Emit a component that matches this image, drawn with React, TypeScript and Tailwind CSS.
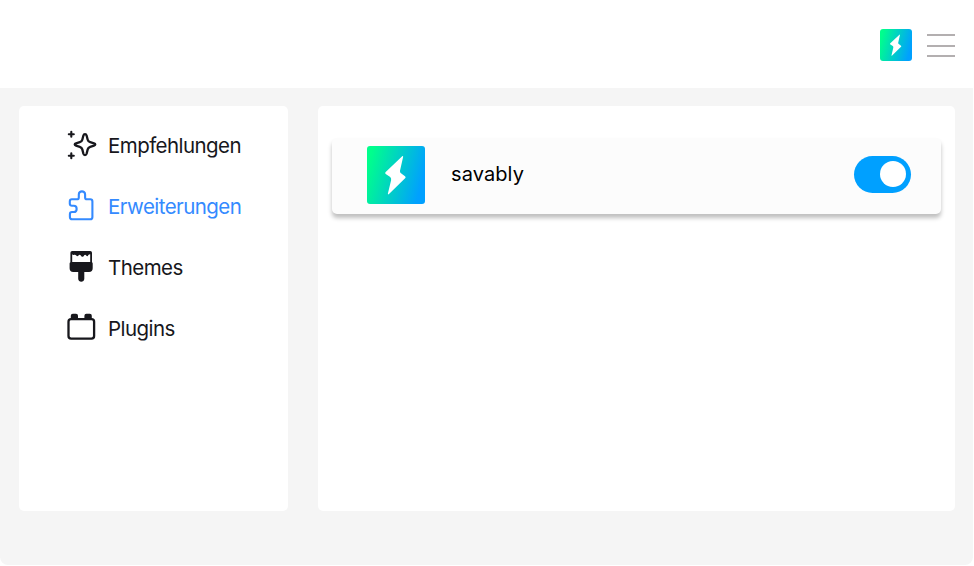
import type { ReactNode } from "react";
import { clsx } from "clsx";

interface NavItem {
  label: string;
  icon: ReactNode;
  active?: boolean;
}

function SparklesIcon() {
  return (
    <svg width="32" height="32" viewBox="0 0 32 32" fill="none" stroke="currentColor" strokeWidth="2.3" strokeLinejoin="round" strokeLinecap="round">
      <path d="M17.4 6.5C17.9 4.7 20.1 4.7 20.6 6.5L21.7 10.7Q22.2 12.7 24.2 13.2L28 14.4C29.7 14.9 29.7 16.1 28 16.6L24.2 17.8Q22.2 18.4 21.7 20.4L20.6 24.8C20.1 26.5 17.9 26.5 17.4 24.8L16.3 20.4Q15.8 18.4 13.8 17.8L10 16.6C8.3 16.1 8.3 14.9 10 14.4L13.8 13.2Q15.8 12.7 16.3 10.7Z" />
      <path d="M5.3 2.8V7.8M2.8 5.3H7.8M5.3 24.2V29.2M2.8 26.7H7.8" strokeWidth="2.1" />
    </svg>
  );
}

function PuzzleIcon() {
  return (
    <svg width="32" height="32" viewBox="0 0 32 32" fill="none" stroke="currentColor" strokeWidth="2.1" strokeLinejoin="round" strokeLinecap="round">
      <path d="M5.9 9.3H10.8Q12.8 9.3 12.8 7.4V4.4C12.8 0.3 19.1 0.3 19.1 4.4V7.4Q19.1 9.3 21.1 9.3H24.2Q26.4 9.3 26.4 11.5V27Q26.4 29.3 24.2 29.3H6.2Q3.9 29.3 3.9 27V24.2Q3.9 22 6 22H7.8C11.6 22 11.6 15.8 7.8 15.8H6Q3.8 15.8 3.8 13.8V11.4Q3.8 9.3 5.9 9.3Z" />
    </svg>
  );
}

function BrushIcon() {
  return (
    <svg width="32" height="32" viewBox="0 0 32 32" fill="currentColor">
      <path d="M6.2 0H24.2Q26 0 26 1.8V11.2Q26.7 11.6 26.7 12.6V17.3Q26.7 21 23 21H18.3V27.7C18.3 31.7 12.2 31.7 12.2 27.7V21H7.3Q3.6 21 3.6 17.3V12.6Q3.6 11.6 4.4 11.2V1.8Q4.4 0 6.2 0ZM6.2 3.2V11H24.2V3.2Q22.7 3.2 22.2 4.3Q21.4 6 20.2 4.4Q19.3 3.4 18.2 4.2C17.2 6.2 15.6 6.2 14.8 4.4Q13.6 3.2 12.5 4.4Q11.2 6 10.3 4.5Q9.2 3.3 8.3 3.8Q7 4.4 6.2 3.2Z" fillRule="evenodd" />
    </svg>
  );
}

function BrickIcon() {
  return (
    <svg width="32" height="32" viewBox="0 0 32 32" fill="none">
      <rect x="2.5" y="7.1" width="25.6" height="19.5" rx="2.6" stroke="currentColor" strokeWidth="2.3" />
      <path d="M4.8 7V3.7Q4.8 1.7 6.8 1.7H10Q12 1.7 12 3.7V7ZM18.4 7V3.7Q18.4 1.7 20.4 1.7H23.8Q25.8 1.7 25.8 3.7V7Z" fill="currentColor" />
    </svg>
  );
}

function Logo({ className }: { className?: string }) {
  return (
    <div className={clsx("bg-[linear-gradient(105deg,#00ff8c_8%,#00a0ff_88%)]", className)}>
      <svg className="size-full" viewBox="0 0 58 58" fill="white">
        <path d="M35.2 10.3Q36.3 9.5 36.1 11L33 24.8Q32.7 26.4 34 27.3L38 30.2Q39.3 31.1 38.1 32.2L22 48Q20.7 49 20.9 47.6L24.1 34.2Q24.5 32.4 23.2 31L18.7 28Q17.5 27 18.7 25.9Z" />
      </svg>
    </div>
  );
}

const navItems: NavItem[] = [
  { label: "Empfehlungen", icon: <SparklesIcon /> },
  { label: "Erweiterungen", icon: <PuzzleIcon />, active: true },
  { label: "Themes", icon: <BrushIcon /> },
  { label: "Plugins", icon: <BrickIcon /> },
];

function Header() {
  return (
    <header className="flex h-[88px] items-start justify-end gap-[15px] bg-white pt-[29px] pr-[18px]">
      <Logo className="size-8 rounded-[3px]" />
      <button className="flex w-7 flex-col pt-[5px]" aria-label="Menü">
        <span className="h-0.5 w-full bg-[#b3afb0]" />
        <span className="mt-[9px] h-0.5 w-full bg-[#b3afb0]" />
        <span className="mt-2 h-0.5 w-full bg-[#b3afb0]" />
      </button>
    </header>
  );
}

function Sidebar() {
  return (
    <nav className="flex w-[269px] flex-col gap-[29px] rounded-[5px] bg-white pt-[23px] pl-[47px]">
      {navItems.map((item) => (
        <a
          key={item.label}
          className={clsx(
            "flex h-8 items-center gap-2.5 text-[20.5px] tracking-[-0.56px]",
            item.active ? "text-[#348aff]" : "text-[#17171c]",
          )}
        >
          {item.icon}
          <span className="pt-0.5">{item.label}</span>
        </a>
      ))}
    </nav>
  );
}

function ExtensionCard({ name }: { name: string }) {
  return (
    <div className="flex h-[76px] items-center rounded-[5px] bg-[#fcfcfc] pr-[30px] pl-[35px] shadow-[0_4px_4px_rgba(0,0,0,0.25)]">
      <Logo className="mt-[-2px] size-[58px] rounded-[3px]" />
      <span className="mt-[-4px] ml-[26px] text-[20px] tracking-[0.1px] text-black">{name}</span>
      <button role="switch" aria-checked="true" aria-label={name} className="mt-[-3px] ml-auto flex h-[37px] w-[57px] items-start justify-end rounded-full bg-[#00a0ff] pt-[5px] pr-[5px]">
        <span className="size-[26px] rounded-full bg-white" />
      </button>
    </div>
  );
}

export default function App() {
  return (
    <div className="h-[566px] w-[974px] bg-white font-['Inter',sans-serif]">
      <div className="h-[565px] w-[973px] overflow-hidden rounded-b-[8px] bg-[#f5f5f5]">
        <Header />
        <div className="flex h-[423px] gap-[30px] pt-[18px] pr-[18px] pl-[19px]">
          <Sidebar />
          <main className="flex-1 rounded-[5px] bg-white px-3.5 pt-8">
            <ExtensionCard name="savably" />
          </main>
        </div>
      </div>
    </div>
  );
}
